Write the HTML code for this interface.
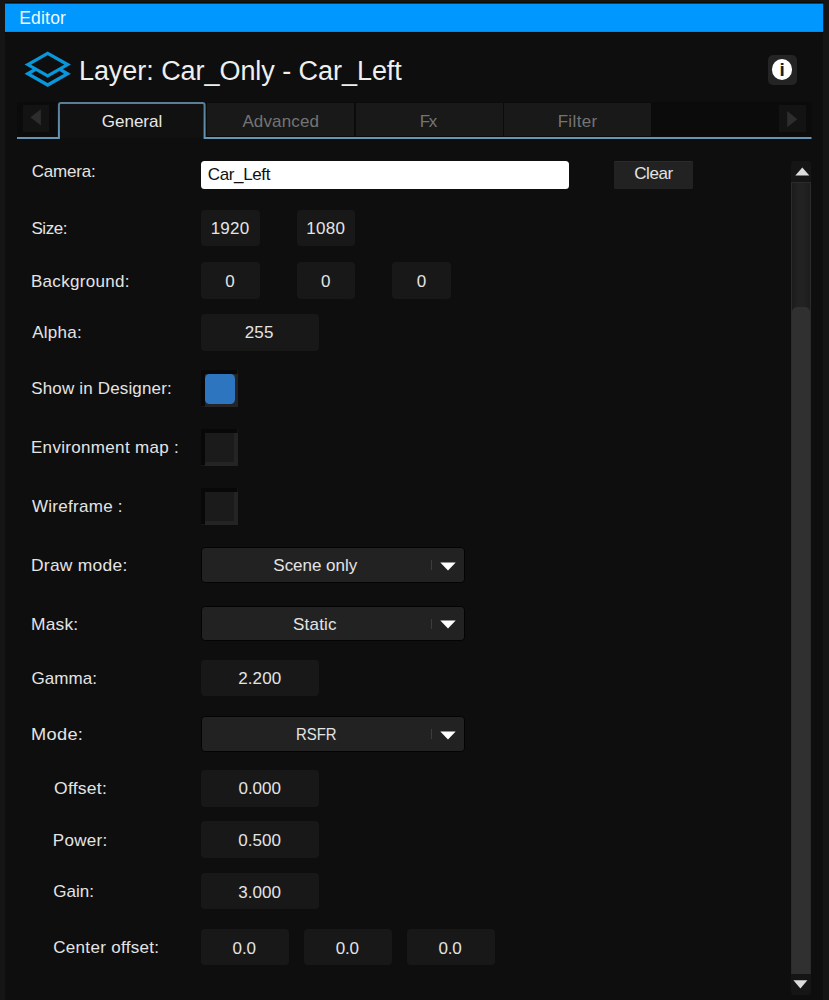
<!DOCTYPE html>
<html>
<head>
<meta charset="utf-8">
<title>Editor</title>
<style>
html,body{margin:0;padding:0;}
body{width:829px;height:1000px;background:#151515;overflow:hidden;position:relative;
  font-family:"Liberation Sans",sans-serif;font-size:16.5px;color:#f0f0f0;}
.abs{position:absolute;}
#panel{position:absolute;left:5px;top:2px;width:818px;height:998px;background:#0e0e0e;}
.t{position:absolute;white-space:nowrap;line-height:20px;height:20px;}
.inp{position:absolute;background:#181818;border-radius:4px;height:36.5px;}
.dd{position:absolute;left:201px;width:262px;height:33.5px;background:#222222;border:1px solid #040404;border-radius:4px;}
.dd .sep{position:absolute;left:228.5px;top:12px;width:1px;height:10px;background:#3c3c3c;}
.dd svg{position:absolute;left:238px;top:13.6px;}
.cb{position:absolute;left:201px;width:36.5px;height:36.5px;background:#242424;}
.cb .sh{position:absolute;left:0;top:0;width:36.5px;height:36.5px;background:#080808;clip-path:polygon(0 0,100% 0,100% 4px,4px 4px,4px 100%,0 100%);}
.cb .in{position:absolute;left:4px;top:4px;width:29px;height:29px;background:#1b1b1b;}
.cb .on{position:absolute;left:4px;top:4px;width:30px;height:30px;background:#2e75bf;border-radius:4.5px;}
.tab{position:absolute;top:103px;height:33px;width:147px;background:#191919;}
</style>
</head>
<body>
<div id="panel"></div>
<svg class="abs" style="left:0;top:0" width="829" height="36" viewBox="0 0 829 36"><rect x="5" y="2" width="818.2" height="31" fill="#0b0a09"/><rect x="5" y="3.6" width="818.2" height="28.3" fill="#0098ff"/></svg>

<!-- layer icon -->
<svg class="abs" style="left:20px;top:46px" width="56" height="46" viewBox="20 46 56 46">
  <path d="M27.85 73.7 L47.7 62.40 L67.55 73.7 L47.7 85.00 Z" fill="none" stroke="#0a96da" stroke-width="3.3" stroke-linejoin="miter"/>
  <path d="M27.85 64.6 L47.7 53.30 L67.55 64.6 L47.7 75.90 Z" fill="#0e0e0e" stroke="#0a96da" stroke-width="3.3" stroke-linejoin="miter"/>
</svg>

<!-- info button -->
<div class="abs" style="left:767.5px;top:55px;width:29.3px;height:29.8px;border-radius:5px;background:#242424;"></div>
<div class="abs" style="left:771.7px;top:59.2px;width:20.8px;height:20.8px;border-radius:50%;background:#ffffff;"></div>
<div class="abs" id="tInfo" style="left:772.1px;top:58px;width:20px;height:24px;line-height:24px;text-align:center;color:#1c1c1c;font-weight:bold;font-size:19px;">i</div>

<!-- tab strip -->
<div class="abs" style="left:17px;top:102px;width:794.5px;height:36px;background:#0b0b0b;"></div>
<div class="abs" style="left:22.8px;top:105px;width:26.6px;height:26.5px;background:#131313;"></div>
<svg class="abs" style="left:29px;top:108px" width="14" height="19" viewBox="0 0 14 19"><path d="M11.9 1.2 L11.9 17.4 L1.4 9.3 Z" fill="#2d2d2d"/></svg>
<div class="abs" style="left:779px;top:105px;width:26.9px;height:26.5px;background:#131313;"></div>
<svg class="abs" style="left:785px;top:110px" width="14" height="19" viewBox="0 0 14 19"><path d="M2.2 1 L2.2 17.3 L12.4 9.3 Z" fill="#2d2d2d"/></svg>

<svg class="abs" style="left:0;top:96px" width="829" height="48" viewBox="0 96 829 48">
  <defs><linearGradient id="tg" x1="0" y1="102" x2="0" y2="139" gradientUnits="userSpaceOnUse"><stop offset="0" stop-color="#587e98"/><stop offset="1" stop-color="#6695b6"/></linearGradient></defs>
  <path d="M58.9 138 V105 Q58.9 103 60.9 103 H202.6 Q204.6 103 204.6 105 V138 Z" fill="#111111"/>
  <path d="M17 138 H58.9 V105 Q58.9 103 60.9 103 H202.6 Q204.6 103 204.6 105 V138 H811.5" fill="none" stroke="url(#tg)" stroke-width="2"/>
</svg>
<div class="tab" style="left:206.5px;"></div>
<div class="tab" style="left:355.5px;"></div>
<div class="tab" style="left:504px;"></div>

<!-- FORM controls -->
<div class="abs" style="left:201px;top:161px;width:367.5px;height:28px;background:#ffffff;border-radius:3.5px;"></div>
<div class="abs" style="left:614px;top:161px;width:79px;height:27.5px;background:#222222;border-radius:1.5px;box-shadow:inset 0 1px 0 #2b2b2b;"></div>

<div class="inp" style="left:201px;top:209.7px;width:58.5px;"></div>
<div class="inp" style="left:296.5px;top:209.7px;width:58.5px;"></div>

<div class="inp" style="left:201px;top:262.4px;width:58.5px;"></div>
<div class="inp" style="left:296.5px;top:262.4px;width:58.5px;"></div>
<div class="inp" style="left:392px;top:262.4px;width:58.5px;"></div>

<div class="inp" style="left:201px;top:314.1px;width:117.5px;"></div>

<div class="cb" style="top:370px;"><div class="sh"></div><div class="on"></div></div>
<div class="cb" style="top:429px;"><div class="sh"></div><div class="in"></div></div>
<div class="cb" style="top:488px;"><div class="sh"></div><div class="in"></div></div>

<div class="dd" style="top:547px;"><div class="sep"></div><svg width="16" height="9" viewBox="0 0 16 9"><path d="M0.3 0.5 L15.7 0.5 L8 8.6 Z" fill="#ffffff"/></svg></div>
<div class="dd" style="top:605.5px;"><div class="sep"></div><svg width="16" height="9" viewBox="0 0 16 9"><path d="M0.3 0.5 L15.7 0.5 L8 8.6 Z" fill="#ffffff"/></svg></div>
<div class="inp" style="left:201px;top:659.8px;width:117.5px;"></div>
<div class="dd" style="top:716px;"><div class="sep"></div><svg width="16" height="9" viewBox="0 0 16 9"><path d="M0.3 0.5 L15.7 0.5 L8 8.6 Z" fill="#ffffff"/></svg></div>

<div class="inp" style="left:201px;top:770.2px;width:117.5px;"></div>
<div class="inp" style="left:201px;top:821.4px;width:117.5px;"></div>
<div class="inp" style="left:201px;top:872.8px;width:117.5px;"></div>
<div class="inp" style="left:201px;top:928.6px;width:88px;"></div>
<div class="inp" style="left:304px;top:928.6px;width:88px;"></div>
<div class="inp" style="left:407px;top:928.6px;width:88px;"></div>

<!-- scrollbar -->
<div class="abs" style="left:791px;top:161px;width:20px;height:20.5px;background:#151515;border-radius:3px 3px 0 0;"></div>
<svg class="abs" style="left:794.5px;top:167px" width="15" height="9" viewBox="0 0 15 9"><path d="M0.3 8.5 L14.3 8.5 L7.3 0.4 Z" fill="#dcdcdc"/></svg>
<div class="abs" style="left:791px;top:182px;width:18px;height:791px;background:linear-gradient(90deg,#1c1c1c,#222222 35%,#222222 65%,#1c1c1c);border:1px solid #2b2b2b;"></div>
<div class="abs" style="left:792px;top:307px;width:18px;height:667px;background:#303030;border-radius:5px 5px 0 0;"></div>
<div class="abs" style="left:791px;top:974px;width:20px;height:20.5px;background:#151515;border-radius:0 0 3px 3px;"></div>
<svg class="abs" style="left:793px;top:980px" width="15" height="9" viewBox="0 0 15 9"><path d="M0.4 0.3 L14.4 0.3 L7.4 8.5 Z" fill="#dcdcdc"/></svg>

<!-- TEXT -->
<div class="t" id="tEditor" style="left:19.20px;top:7.90px;font-size:17.50px;letter-spacing:0.200px;color:#eef8ff;">Editor</div>
<div class="t" id="tTitle" style="left:78.95px;top:60.80px;font-size:27.00px;letter-spacing:-0.050px;color:#efefef;">Layer: Car_Only - Car_Left</div>
<div class="t" id="tGeneral" style="left:101.75px;top:111.50px;font-size:17.00px;letter-spacing:0.004px;color:#e8e8e8;">General</div>
<div class="t" id="tAdvanced" style="left:242.40px;top:111.50px;font-size:17.00px;letter-spacing:0.143px;color:#747474;">Advanced</div>
<div class="t" id="tFx" style="left:419.75px;top:111.50px;font-size:17.00px;letter-spacing:-1.500px;color:#747474;">Fx</div>
<div class="t" id="tFilter" style="left:557.65px;top:111.50px;font-size:17.00px;letter-spacing:0.350px;color:#747474;">Filter</div>
<div class="t" id="l1" style="left:31.65px;top:161.80px;font-size:17.00px;letter-spacing:-0.167px;color:#e4e4e4;">Camera:</div>
<div class="t" id="v1" style="left:207.75px;top:165.00px;font-size:17.00px;letter-spacing:-0.361px;color:#101010;">Car_Left</div>
<div class="t" id="vClear" style="left:634.15px;top:164.30px;font-size:17.00px;letter-spacing:-0.371px;color:#e4e4e4;">Clear</div>
<div class="t" id="l2" style="left:31.45px;top:219.20px;font-size:17.00px;letter-spacing:-0.445px;color:#e4e4e4;">Size:</div>
<div class="t" id="v2a" style="left:210.65px;top:219.20px;font-size:17.00px;letter-spacing:0.250px;color:#e4e4e4;">1920</div>
<div class="t" id="v2b" style="left:306.35px;top:219.20px;font-size:17.00px;letter-spacing:0.250px;color:#e4e4e4;">1080</div>
<div class="t" id="l3" style="left:30.95px;top:271.90px;font-size:17.00px;letter-spacing:0.300px;color:#e4e4e4;">Background:</div>
<div class="t" id="v3a" style="left:225.28px;top:272.10px;font-size:17.00px;letter-spacing:0.000px;color:#e4e4e4;">0</div>
<div class="t" id="v3b" style="left:320.96px;top:272.10px;font-size:17.00px;letter-spacing:0.000px;color:#e4e4e4;">0</div>
<div class="t" id="v3c" style="left:416.68px;top:272.10px;font-size:17.00px;letter-spacing:0.000px;color:#e4e4e4;">0</div>
<div class="t" id="l4" style="left:32.20px;top:323.40px;font-size:17.00px;letter-spacing:0.250px;color:#e4e4e4;">Alpha:</div>
<div class="t" id="v4" style="left:244.75px;top:323.30px;font-size:17.00px;letter-spacing:0.125px;color:#e4e4e4;">255</div>
<div class="t" id="l5" style="left:31.15px;top:379.10px;font-size:17.00px;letter-spacing:0.168px;color:#e4e4e4;">Show in Designer:</div>
<div class="t" id="l6" style="left:30.95px;top:437.90px;font-size:17.00px;letter-spacing:0.325px;color:#e4e4e4;">Environment map :</div>
<div class="t" id="l7" style="left:32.00px;top:497.00px;font-size:17.00px;letter-spacing:0.275px;color:#e4e4e4;">Wireframe :</div>
<div class="t" id="l8" style="left:31.00px;top:556.40px;font-size:17.00px;letter-spacing:0.250px;color:#e4e4e4;transform:scaleX(1.0249);transform-origin:0 0;">Draw mode:</div>
<div class="t" id="v8" style="left:273.35px;top:556.40px;font-size:17.00px;letter-spacing:-0.032px;color:#e4e4e4;">Scene only</div>
<div class="t" id="l9" style="left:31.00px;top:614.80px;font-size:17.00px;letter-spacing:0.200px;color:#e4e4e4;transform:scaleX(1.0229);transform-origin:0 0;">Mask:</div>
<div class="t" id="v9" style="left:293.05px;top:614.90px;font-size:17.00px;letter-spacing:0.200px;color:#e4e4e4;">Static</div>
<div class="t" id="l10" style="left:31.45px;top:669.10px;font-size:17.00px;letter-spacing:0.050px;color:#e4e4e4;">Gamma:</div>
<div class="t" id="v10" style="left:238.15px;top:669.10px;font-size:17.00px;letter-spacing:0.121px;color:#e4e4e4;">2.200</div>
<div class="t" id="l11" style="left:31.00px;top:725.00px;font-size:17.00px;letter-spacing:0.300px;color:#e4e4e4;transform:scaleX(1.0711);transform-origin:0 0;">Mode:</div>
<div class="t" id="v11" style="left:295.70px;top:725.00px;font-size:17.00px;letter-spacing:0.000px;color:#e4e4e4;transform:scaleX(0.8758);transform-origin:0 0;">RSFR</div>
<div class="t" id="l12" style="left:53.50px;top:778.50px;font-size:17.00px;letter-spacing:0.250px;color:#e4e4e4;transform:scaleX(1.0303);transform-origin:0 0;">Offset:</div>
<div class="t" id="v12" style="left:238.45px;top:779.40px;font-size:17.00px;letter-spacing:0.002px;color:#e4e4e4;">0.000</div>
<div class="t" id="l13" style="left:52.75px;top:831.30px;font-size:17.00px;letter-spacing:0.300px;color:#e4e4e4;">Power:</div>
<div class="t" id="v13" style="left:238.35px;top:831.40px;font-size:17.00px;letter-spacing:0.008px;color:#e4e4e4;">0.500</div>
<div class="t" id="l14" style="left:53.25px;top:882.40px;font-size:17.00px;letter-spacing:0.004px;color:#e4e4e4;">Gain:</div>
<div class="t" id="v14" style="left:238.35px;top:882.80px;font-size:17.00px;letter-spacing:0.008px;color:#e4e4e4;">3.000</div>
<div class="t" id="l15" style="left:53.25px;top:938.30px;font-size:17.00px;letter-spacing:0.308px;color:#e4e4e4;">Center offset:</div>
<div class="t" id="v15a" style="left:232.55px;top:938.50px;font-size:17.00px;letter-spacing:-0.125px;color:#e4e4e4;">0.0</div>
<div class="t" id="v15b" style="left:335.65px;top:938.50px;font-size:17.00px;letter-spacing:-0.125px;color:#e4e4e4;">0.0</div>
<div class="t" id="v15c" style="left:438.45px;top:938.50px;font-size:17.00px;letter-spacing:-0.125px;color:#e4e4e4;">0.0</div>
</body>
</html>
